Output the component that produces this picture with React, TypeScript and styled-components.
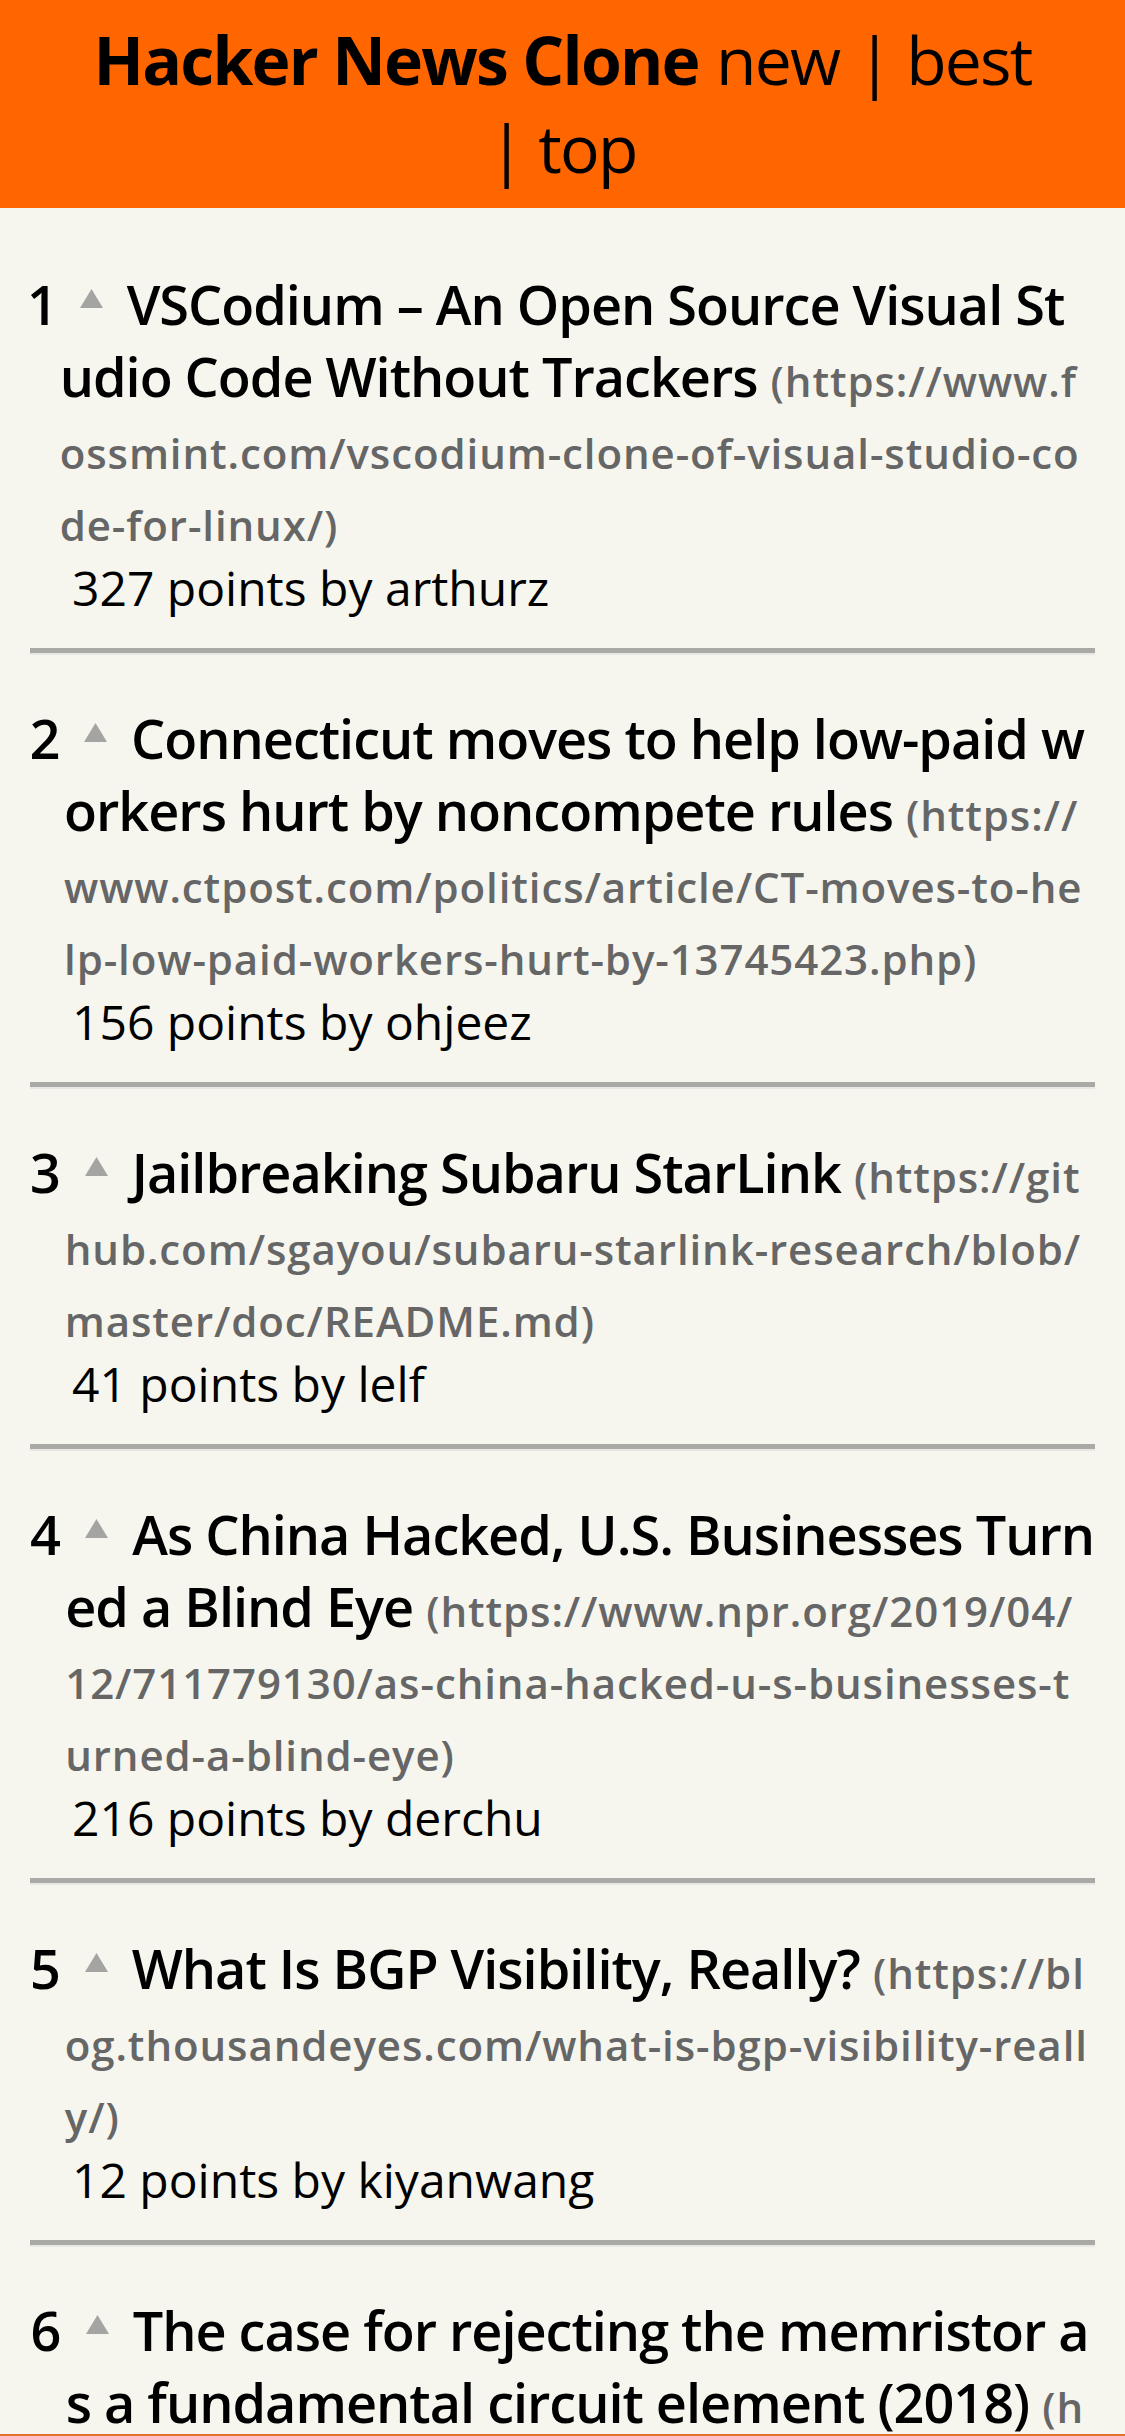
import React from "react";
import styled, { createGlobalStyle } from "styled-components";

const GlobalStyle = createGlobalStyle`
  html, body {
    margin: 0;
    padding: 0;
    background: #f6f6ef;
  }
  body {
    font-family: "Open Sans", "Noto Sans", "DejaVu Sans", sans-serif;
    color: #000;
  }
`;

const Page = styled.div`
  min-height: 100vh;
  background: #f6f6ef;
`;

const Header = styled.header`
  background: #ff6600;
  padding: 15px 24px 17px;
  text-align: center;
  font-size: 66px;
  line-height: 88px;
  color: #000;
`;

const Brand = styled.span`
  font-weight: 700;
  letter-spacing: -1.8px;
`;

const NavGroup = styled.span`
  white-space: nowrap;
  letter-spacing: -1.8px;
`;

const NavLink = styled.a`
  color: #000;
  text-decoration: none;
  font-weight: 400;
`;

const List = styled.ol`
  list-style: none;
  margin: 0;
  padding: 13px 30px 0;
`;

const Item = styled.li`
  padding-top: 47px;
`;

const TitleRow = styled.div`
  display: flex;
  font-size: 54px;
  line-height: 72px;
  font-weight: 600;
  letter-spacing: -1px;
`;

const Rank = styled.span`
  flex: none;
  padding-right: 5px;
  font-variant-numeric: proportional-nums;
`;

const Content = styled.div`
  flex: 1;
  min-width: 0;
  word-break: break-all;
  overflow-wrap: anywhere;
`;

const Arrow = styled.svg`
  display: inline-block;
  vertical-align: top;
  width: 25px;
  height: 21px;
  margin: 20px 23px 0 19px;
`;

const Title = styled.a`
  color: #000;
  text-decoration: none;
`;

const Url = styled.span`
  font-size: 42px;
  line-height: 1;
  font-weight: 600;
  color: #666;
  letter-spacing: 0.9px;
`;

const Points = styled.div`
  font-size: 48px;
  line-height: 64px;
  padding-left: 42px;
`;

const Divider = styled.hr`
  margin: 28px 0 0;
  height: 0;
  border: 0;
  border-top: 5px solid #a9a9a6;
  border-bottom: 2px solid #e7e7e3;
`;

const BottomEdge = styled.div`
  position: fixed;
  left: 0;
  right: 0;
  bottom: 0;
  height: 2px;
  background: #e2712d;
`;

type Story = {
  title: string;
  url: string;
  points: number;
  by: string;
};

const stories: Story[] = [
  {
    title: "VSCodium – An Open Source Visual Studio Code Without Trackers",
    url: "https://www.fossmint.com/vscodium-clone-of-visual-studio-code-for-linux/",
    points: 327,
    by: "arthurz",
  },
  {
    title: "Connecticut moves to help low-paid workers hurt by noncompete rules",
    url: "https://www.ctpost.com/politics/article/CT-moves-to-help-low-paid-workers-hurt-by-13745423.php",
    points: 156,
    by: "ohjeez",
  },
  {
    title: "Jailbreaking Subaru StarLink",
    url: "https://github.com/sgayou/subaru-starlink-research/blob/master/doc/README.md",
    points: 41,
    by: "lelf",
  },
  {
    title: "As China Hacked, U.S. Businesses Turned a Blind Eye",
    url: "https://www.npr.org/2019/04/12/711779130/as-china-hacked-u-s-businesses-turned-a-blind-eye",
    points: 216,
    by: "derchu",
  },
  {
    title: "What Is BGP Visibility, Really?",
    url: "https://blog.thousandeyes.com/what-is-bgp-visibility-really/",
    points: 12,
    by: "kiyanwang",
  },
  {
    title: "The case for rejecting the memristor as a fundamental circuit element (2018)",
    url: "https://www.nature.com/articles/s41598-018-29394-7",
    points: 38,
    by: "sohkamyung",
  },
];

const VoteArrow = () => (
  <Arrow viewBox="0 0 25 21" aria-hidden="true">
    <polygon points="12.5,1 24,20 1,20" fill="#a4a4a2" />
  </Arrow>
);

export default function App() {
  return (
    <Page>
      <GlobalStyle />
      <Header>
        <Brand>Hacker News Clone</Brand>{" "}
        <NavGroup>
          <NavLink href="#">new</NavLink>
        </NavGroup>{" "}
        <NavGroup>
          <NavLink href="#">|</NavLink>{"\u00a0"}
          <NavLink href="#">best</NavLink>
        </NavGroup>{" "}
        <NavGroup>
          <NavLink href="#">|</NavLink>{"\u00a0"}
          <NavLink href="#">top</NavLink>
        </NavGroup>
      </Header>
      <List>
        {stories.map((s, i) => (
          <Item key={s.url}>
            <TitleRow>
              <Rank>{i + 1}</Rank>
              <Content>
                <VoteArrow />
                <Title href={s.url}>{s.title}</Title> <Url>({s.url})</Url>
              </Content>
            </TitleRow>
            <Points>
              {s.points} points by {s.by}
            </Points>
            <Divider />
          </Item>
        ))}
      </List>
      <BottomEdge />
    </Page>
  );
}
